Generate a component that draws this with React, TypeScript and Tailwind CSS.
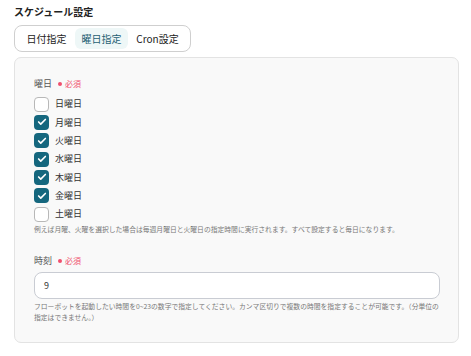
import { Check } from "lucide-react";

const days = [
  { label: "日曜日", checked: false },
  { label: "月曜日", checked: true },
  { label: "火曜日", checked: true },
  { label: "水曜日", checked: true },
  { label: "木曜日", checked: true },
  { label: "金曜日", checked: true },
  { label: "土曜日", checked: false },
];

function Required() {
  return (
    <span className="ml-[6px] flex items-center gap-[3px] text-[8px] text-[#f0506e]">
      <span className="h-[4px] w-[4px] rounded-full bg-[#f0506e]" />
      必須
    </span>
  );
}

export default function App() {
  const font = { fontFamily: '"Noto Sans CJK JP", "Noto Sans", sans-serif' };
  return (
    <div className="h-[356px] w-[471px] bg-white px-[14px] pt-[5px] text-[#333]" style={font}>
      <div className="text-[10px] font-bold leading-[14px] text-[#222]">スケジュール設定</div>

      <div className="mt-[6px] inline-flex h-[27px] items-center rounded-[8px] border border-[#cfcfcf] px-[3px] text-[10px]">
        <div className="flex h-[21px] w-[57px] items-center justify-center text-[#222]">日付指定</div>
        <div className="flex h-[21px] w-[53px] items-center justify-center rounded-[6px] bg-[#eef7f7] text-[#1f5f73]">曜日指定</div>
        <div className="flex h-[21px] w-[59px] items-center justify-center text-[#222]">Cron設定</div>
      </div>

      <div className="mt-[5px] w-[445px] rounded-[7px] border border-[#e3e3e3] bg-[#f9f9f9] px-[19px] pb-[20px] pt-[20px]">
        <div className="flex items-center text-[9px] leading-[12px] text-[#555]">
          曜日
          <Required />
        </div>

        <div className="mt-[5px] flex flex-col">
          {days.map((d) => (
            <div key={d.label} className="flex h-[18.33px] items-center gap-[6px]">
              {d.checked ? (
                <span className="flex h-[15px] w-[15px] items-center justify-center rounded-[4px] bg-[#15677e]">
                  <Check className="h-[10px] w-[10px] text-white" strokeWidth={4} />
                </span>
              ) : (
                <span className="h-[15px] w-[15px] rounded-[4px] border border-[#b8b8b8] bg-white" />
              )}
              <span className="text-[9px] text-[#333]">{d.label}</span>
            </div>
          ))}
        </div>

        <div className="mt-[1px] text-[6.8px] leading-[10px] text-[#777]">
          例えば月曜、火曜を選択した場合は毎週月曜日と火曜日の指定時間に実行されます。すべて設定すると毎日になります。
        </div>

        <div className="mt-[21px] flex items-center text-[9px] leading-[12px] text-[#555]">
          時刻
          <Required />
        </div>

        <div className="mt-[5px] flex h-[27px] w-[406px] items-center rounded-[8px] border border-[#c9ccd3] bg-white px-[9px] text-[9px] text-[#333]">
          9
        </div>

        <div className="mt-[2px] w-[406px] text-[6.8px] leading-[10.5px] text-[#777]">
          フローボットを起動したい時間を0~23の数字で指定してください。カンマ区切りで複数の時間を指定することが可能です。（分単位の指定はできません。）
        </div>
      </div>
    </div>
  );
}
